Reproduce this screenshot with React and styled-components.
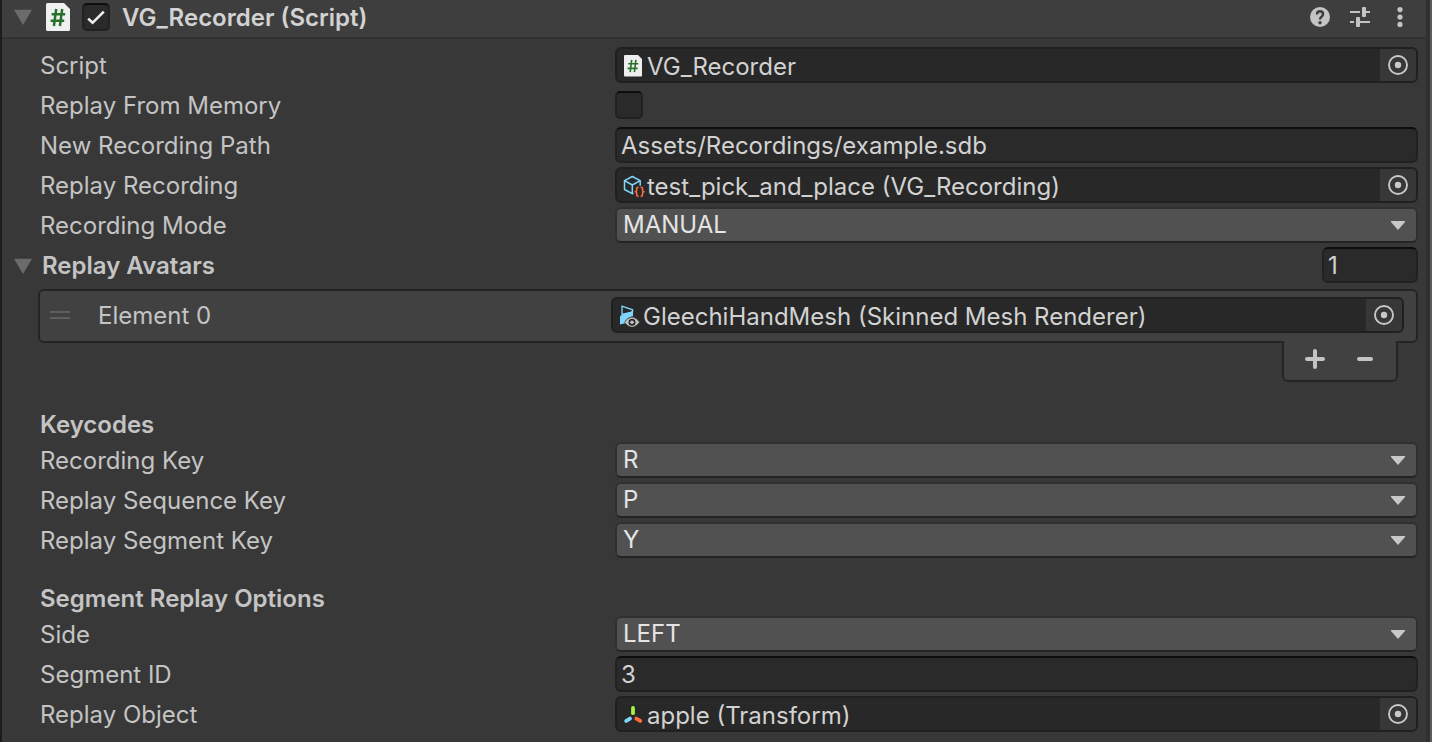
import React, { useId, useState } from "react";
import styled, { createGlobalStyle } from "styled-components";

const GlobalStyle = createGlobalStyle`
  *, *::before, *::after { box-sizing: border-box; }
  body {
    margin: 0;
    background: #383838;
    color: #c4c4c4;
    font-family: Inter, "Liberation Sans", sans-serif;
    font-size: 24px;
    line-height: 32px;
  }
  button, input, select { font: inherit; color: inherit; }
`;

const Inspector = styled.main`
  min-height: 100vh;
  border-left: 2px solid #1c1c1c;
  border-right: 2px solid #5c5c5c;
`;

const Body = styled.div`
  min-height: 100vh;
  border-right: 4px solid #303030;
`;

const Header = styled.header`
  display: flex;
  align-items: center;
  height: 39px;
  padding: 0 6px 4px 12px;
  background: #3e3e3e;
  border-bottom: 2px solid #303030;
`;

const HeaderIcon = styled.span`
  display: flex;
  margin: 0 12px 0 14px;
`;

const Title = styled.h1`
  flex: 1;
  margin: 0 0 0 12px;
  padding-top: 2px;
  font-size: 24px;
  font-weight: 600;
  color: #d2d2d2;
`;

const IconButton = styled.button`
  display: flex;
  align-items: center;
  justify-content: center;
  flex: none;
  width: ${(p) => p.$width || 40}px;
  min-height: 32px;
  padding: 0;
  border: 0;
  background: none;
`;

const CheckWrap = styled.span`
  position: relative;
  display: block;
  width: 28px;
  height: 28px;

  svg {
    position: absolute;
    inset: 0;
    pointer-events: none;
  }

  input:not(:checked) + svg { display: none; }
`;

const CheckInput = styled.input.attrs({ type: "checkbox" })`
  appearance: none;
  display: block;
  width: 28px;
  height: 28px;
  margin: 0;
  border: 2px solid #212121;
  border-top-color: #0d0d0d;
  border-radius: 5px;
  background: #2a2a2a;
`;

const Fields = styled.div`
  display: flex;
  flex-direction: column;
  gap: 4px;
  padding: ${(p) => p.$top || 0}px 8px 0 38px;
`;

const Row = styled.div`
  display: grid;
  grid-template-columns: 575px minmax(0, 1fr);
  align-items: center;
  height: 36px;
`;

const Label = styled.label`
  padding-top: 2px;
  white-space: nowrap;
`;

const SectionTitle = styled.h2`
  margin: 0;
  padding: ${(p) => p.$top}px 8px 1px 38px;
  font-size: 24px;
  font-weight: 600;
`;

const TextBox = styled.input`
  width: 100%;
  height: 36px;
  min-width: 0;
  padding: 0 4px;
  border: 2px solid #212121;
  border-top-color: #0d0d0d;
  border-radius: 6px;
  background: #2a2a2a;
  color: #d2d2d2;
`;

const ObjectBox = styled.div`
  display: flex;
  height: 36px;
  min-width: 0;
  border: 2px solid #202020;
  border-radius: 6px;
  background: #282828;
  color: #d2d2d2;
  overflow: hidden;
`;

const ObjectValue = styled.span`
  display: flex;
  align-items: center;
  flex: 1;
  min-width: 0;
  gap: 2px;
  padding-left: 4px;
  white-space: nowrap;

  svg { flex: none; }
  span { padding-top: 4px; }
`;

const PickButton = styled(IconButton)`
  background: #373737;
`;

const SelectBox = styled.span`
  position: relative;
  display: block;

  svg {
    position: absolute;
    right: 13px;
    top: 14px;
    pointer-events: none;
  }
`;

const Select = styled.select`
  appearance: none;
  display: block;
  width: 100%;
  height: 36px;
  padding: 0 36px 2px 6px;
  border: 2px solid #303030;
  border-bottom-color: #242424;
  border-radius: 6px;
  background: #515151;
  color: #e4e4e4;
`;

const ListHeader = styled.div`
  display: flex;
  align-items: center;
  height: 36px;
  margin-top: 4px;
  padding: 0 8px 0 12px;
`;

const Foldout = styled.button`
  display: flex;
  align-items: center;
  gap: 10px;
  flex: 1;
  padding: 2px 0 0;
  border: 0;
  background: none;
  font-weight: 600;
  text-align: left;
`;

const CountBox = styled(TextBox)`
  width: 96px;
`;

const List = styled.div`
  margin: 6px 8px 0 36px;
  border: 2px solid #242424;
  border-radius: 6px;
  background: #414141;
`;

const ListItem = styled.div`
  display: grid;
  grid-template-columns: 58px 513px minmax(0, 1fr);
  align-items: center;
  height: 50px;
  padding: 0 12px 2px 0;
`;

const Grip = styled.span`
  width: 20px;
  height: 8px;
  margin-left: 10px;
  border: solid #5e5e5e;
  border-width: 2px 0;
`;

const ListFooter = styled.div`
  position: relative;
  display: flex;
  align-items: flex-start;
  width: 116px;
  height: 41px;
  margin: -2px 28px 0 auto;
  padding: 2px 6px 0;
  border: 2px solid #242424;
  border-top: 0;
  border-radius: 0 0 6px 6px;
  background: #414141;
`;

const Triangle = () => (
  <svg width="18" height="16" viewBox="0 0 18 16" fill="#6b6b6b" aria-hidden="true">
    <path d="M0 .8h18L9 16z" />
  </svg>
);

const Arrow = () => (
  <svg width="14" height="9" viewBox="0 0 14 9" fill="#c8c8c8" aria-hidden="true">
    <path d="M0 0h14v1L7 9 0 1z" />
  </svg>
);

const Target = () => (
  <svg width="20" height="20" viewBox="0 0 20 20" aria-hidden="true">
    <circle cx="10" cy="10" r="9" fill="none" stroke="#c8c8c8" strokeWidth="1.9" />
    <circle cx="10" cy="10" r="3.2" fill="#c8c8c8" />
  </svg>
);

const CheckMark = () => (
  <svg width="28" height="28" viewBox="0 0 28 28" fill="none" stroke="#f0f0f0" strokeWidth="2.6" aria-hidden="true">
    <path d="M6.200 15.600l4.400 4.200L21.800 8.600" />
  </svg>
);

const ScriptLarge = () => (
  <svg width="24" height="28" viewBox="0 0 24 28" aria-hidden="true">
    <path d="M1.500 0H18l6 6v20.500a1.500 1.500 0 0 1-1.500 1.500h-21A1.500 1.500 0 0 1 0 26.500v-25A1.500 1.500 0 0 1 1.500 0z" fill="#f0f0f0" />
    <path d="M10.200 6 7.900 23M16.200 6l-2.300 17M5.600 11.200h13.600M4.600 17.800h13.600" fill="none" stroke="#27712b" strokeWidth="2.500" />
  </svg>
);

const ScriptSmall = () => (
  <svg width="24" height="24" viewBox="0 0 24 24" aria-hidden="true">
    <path d="M4 2h13l4 4v16.500a1 1 0 0 1-1 1H4a1 1 0 0 1-1-1V3a1 1 0 0 1 1-1z" fill="#eee" />
    <path d="M10.700 6.800 9.200 19.200M14.900 6.800l-1.500 12.400M7.300 10.700h10M6.600 15.400h10" fill="none" stroke="#27712b" strokeWidth="1.600" />
  </svg>
);

const RecordingIcon = () => (
  <svg width="24" height="24" viewBox="0 0 24 24" fill="none" strokeLinejoin="round" aria-hidden="true">
    <path d="M12.500 20.200 11.300 20.700 3.500 16.500V7.700l7.800-4.200 7.900 4.200v5M3.500 7.700l7.800 4.300 7.900-4.300M11.300 12v8.700" stroke="#7fd6fd" strokeWidth="1.500" />
    <path d="M17.600 14.200h-.6q-1.300 0-1.300 1.400v1.700q0 1.500-1.500 1.500 1.500 0 1.500 1.500v1.500q0 1.400 1.300 1.400h.6M19.600 14.200h.6q1.300 0 1.300 1.400v1.700q0 1.500 1.500 1.500-1.500 0-1.500 1.500v1.500q0 1.400-1.300 1.400h-.6" stroke="#ff6b3d" strokeWidth="1.600" />
  </svg>
);

const MeshIcon = () => (
  <svg width="24" height="24" viewBox="0 0 24 24" aria-hidden="true">
    <path d="M5 11.500V3.200l10.600 3.600v2z" fill="#282828" stroke="#7fd6fd" strokeWidth="1.300" />
    <path d="M3 13.300q2.500-2.600 6.500-3T16 7.300v5.900q-5 .8-8 4.800v2.200L3 21.600z" fill="#7fd6fd" />
    <path d="M7.400 19.200q7.600-10.200 15.200 0-7.600 10.200-15.200 0z" fill="#c4c4c4" stroke="#282828" strokeWidth=".6" />
    <circle cx="15" cy="19.200" r="3.500" fill="#282828" />
    <circle cx="15" cy="19.200" r="1.800" fill="#c4c4c4" />
  </svg>
);

const TransformIcon = () => (
  <svg width="24" height="24" viewBox="0 0 24 24" fill="none" strokeWidth="3.800" strokeLinecap="round" aria-hidden="true">
    <path d="M12 6v5.200" stroke="#a4f244" />
    <path d="M9 16.600 5.200 18.900" stroke="#7fd6fd" />
    <path d="M15.300 16.600l4 2.300" stroke="#ff6b3d" />
  </svg>
);

const HelpIcon = () => (
  <svg width="20" height="20" viewBox="0 0 20 20" aria-hidden="true">
    <circle cx="10" cy="10" r="10" fill="#c4c4c4" />
    <path d="M7 7.400C7 5 8.300 4.300 10 4.300s3 1.100 3 2.900c0 2.500-3 2.500-3 5.400" fill="none" stroke="#3e3e3e" strokeWidth="2.500" />
    <circle cx="10" cy="15.700" r="1.700" fill="#3e3e3e" />
  </svg>
);

const PresetIcon = () => (
  <svg width="20" height="20" viewBox="0 0 20 20" fill="#c4c4c4" aria-hidden="true">
    <path d="M0 4h10v2H0zM14 4h6v2h-6zM0 14h4v2H0zM8 14h12v2H8z" />
    <rect x="12" width="4" height="10" rx="1" />
    <rect x="6" y="10" width="4" height="10" rx="1" />
  </svg>
);

const MenuIcon = () => (
  <svg width="20" height="20" viewBox="0 0 20 20" fill="#c4c4c4" aria-hidden="true">
    <circle cx="10" cy="2.600" r="2.600" />
    <circle cx="10" cy="10" r="2.600" />
    <circle cx="10" cy="17.400" r="2.600" />
  </svg>
);

const Plus = () => (
  <svg width="20" height="20" viewBox="0 0 20 20" stroke="#c4c4c4" strokeWidth="4" strokeLinecap="round" aria-hidden="true">
    <path d="M2 10h16M10 2v16" />
  </svg>
);

const Minus = () => (
  <svg width="20" height="20" viewBox="0 0 20 20" stroke="#c4c4c4" strokeWidth="4" strokeLinecap="round" aria-hidden="true">
    <path d="M4 10h12" />
  </svg>
);

function CheckBox(props) {
  return (
    <CheckWrap>
      <CheckInput {...props} />
      <CheckMark />
    </CheckWrap>
  );
}

function ObjectField({ label, id, icon, value }) {
  return (
    <ObjectBox>
      <ObjectValue>
        {icon}
        <span>{value}</span>
      </ObjectValue>
      <PickButton id={id} $width={36} aria-label={`Select ${label}`}>
        <Target />
      </PickButton>
    </ObjectBox>
  );
}

function ObjectRow(props) {
  const id = useId();
  return (
    <Row>
      <Label htmlFor={id}>{props.label}</Label>
      <ObjectField id={id} {...props} />
    </Row>
  );
}

function TextRow({ label, value }) {
  const id = useId();
  return (
    <Row>
      <Label htmlFor={id}>{label}</Label>
      <TextBox id={id} type="text" defaultValue={value} />
    </Row>
  );
}

function CheckRow({ label }) {
  const id = useId();
  return (
    <Row>
      <Label htmlFor={id}>{label}</Label>
      <CheckBox id={id} />
    </Row>
  );
}

function SelectRow({ label, options }) {
  const id = useId();
  return (
    <Row>
      <Label htmlFor={id}>{label}</Label>
      <SelectBox>
        <Select id={id}>
          {options.map((option) => (
            <option key={option}>{option}</option>
          ))}
        </Select>
        <Arrow />
      </SelectBox>
    </Row>
  );
}

function AvatarList() {
  const [open, setOpen] = useState(true);
  const elementId = useId();
  return (
    <section>
      <ListHeader>
        <Foldout aria-expanded={open} onClick={() => setOpen(!open)}>
          <Triangle />
          Replay Avatars
        </Foldout>
        <CountBox type="text" defaultValue="1" aria-label="Replay Avatars size" />
      </ListHeader>
      {open && (
        <>
          <List>
            <ListItem>
              <Grip />
              <Label htmlFor={elementId}>Element 0</Label>
              <ObjectField
                id={elementId}
                label="Element 0"
                icon={<MeshIcon />}
                value="GleechiHandMesh (Skinned Mesh Renderer)"
              />
            </ListItem>
          </List>
          <ListFooter>
            <IconButton $width={50} aria-label="Add element"><Plus /></IconButton>
            <IconButton $width={50} aria-label="Remove element"><Minus /></IconButton>
          </ListFooter>
        </>
      )}
    </section>
  );
}

export default function App() {
  return (
    <>
      <GlobalStyle />
      <Inspector>
        <Body>
          <Header>
            <IconButton $width={18} aria-label="Collapse component"><Triangle /></IconButton>
            <HeaderIcon><ScriptLarge /></HeaderIcon>
            <CheckBox defaultChecked aria-label="Enable VG_Recorder" />
            <Title>VG_Recorder (Script)</Title>
            <IconButton aria-label="Help"><HelpIcon /></IconButton>
            <IconButton aria-label="Presets"><PresetIcon /></IconButton>
            <IconButton aria-label="More options"><MenuIcon /></IconButton>
          </Header>

          <Fields $top={8}>
            <ObjectRow label="Script" icon={<ScriptSmall />} value="VG_Recorder" />
            <CheckRow label="Replay From Memory" />
            <TextRow label="New Recording Path" value="Assets/Recordings/example.sdb" />
            <ObjectRow
              label="Replay Recording"
              icon={<RecordingIcon />}
              value="test_pick_and_place (VG_Recording)"
            />
            <SelectRow label="Recording Mode" options={["MANUAL"]} />
          </Fields>

          <AvatarList />

          <SectionTitle $top={27}>Keycodes</SectionTitle>
          <Fields>
            <SelectRow label="Recording Key" options={["R", "P", "Y"]} />
            <SelectRow label="Replay Sequence Key" options={["P", "R", "Y"]} />
            <SelectRow label="Replay Segment Key" options={["Y", "P", "R"]} />
          </Fields>

          <SectionTitle $top={25}>Segment Replay Options</SectionTitle>
          <Fields>
            <SelectRow label="Side" options={["LEFT", "RIGHT"]} />
            <TextRow label="Segment ID" value="3" />
            <ObjectRow label="Replay Object" icon={<TransformIcon />} value="apple (Transform)" />
          </Fields>
        </Body>
      </Inspector>
    </>
  );
}
